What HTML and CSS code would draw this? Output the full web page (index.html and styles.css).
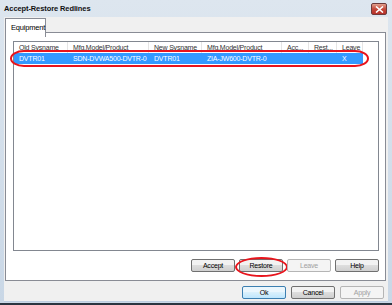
FILE: index.html
```html
<!DOCTYPE html>
<html lang="en">
<head>
    <meta charset="UTF-8">
    <title>Accept-Restore Redlines</title>
    <link rel="stylesheet" href="styles.css">
</head>
<body>
    <div class="window">
        <div class="titlebar">
            <span class="title">Accept-Restore Redlines</span>
            <span class="close">
                <svg width="9" height="7" viewBox="0 0 9 7"><path d="M1 0.5 L8 6.5 M8 0.5 L1 6.5" stroke="#fff" stroke-width="1.6"/></svg>
            </span>
        </div>
        <div class="client">
            <div class="tabs">
                <div class="tab active">Equipment</div>
            </div>
            <div class="panel">
                <div class="list">
                    <div class="row header">
                        <div class="cell c1">Old Sysname</div>
                        <div class="cell c2">Mfg.Model/Product</div>
                        <div class="cell c3">New Sysname</div>
                        <div class="cell c4">Mfg.Model/Product</div>
                        <div class="cell c5">Acc...</div>
                        <div class="cell c6">Rest...</div>
                        <div class="cell c7">Leave</div>
                        <div class="cell fill"></div>
                    </div>
                    <div class="row item selected">
                        <div class="cell c1">DVTR01</div>
                        <div class="cell c2">SDN-DVWA500-DVTR-0</div>
                        <div class="cell c3">DVTR01</div>
                        <div class="cell c4">ZIA-JW600-DVTR-0</div>
                        <div class="cell c5"></div>
                        <div class="cell c6"></div>
                        <div class="cell c7">X</div>
                        <span class="mark row-mark"></span>
                    </div>
                </div>
                <div class="actions">
                    <button class="btn">Accept</button>
                    <button class="btn marked">Restore<span class="mark btn-mark"></span></button>
                    <button class="btn" disabled>Leave</button>
                    <button class="btn">Help</button>
                </div>
            </div>
            <div class="footer">
                <button class="btn default">Ok</button>
                <button class="btn">Cancel</button>
                <button class="btn" disabled>Apply</button>
            </div>
        </div>
    </div>
</body>
</html>
```

FILE: styles.css
```css
body {
    margin: 0;
    font-family: "Liberation Sans", Arial, sans-serif;
    font-size: 7px;
    letter-spacing: -0.2px;
    color: #000;
}
.window {
    width: 392px;
    height: 305px;
    box-sizing: border-box;
    background: linear-gradient(#dde6ef, #c9d7e6);
    border-bottom: 2px solid #2a3440;
    display: flex;
    flex-direction: column;
}
.titlebar {
    height: 17px;
    display: flex;
    align-items: center;
    justify-content: space-between;
    padding: 0 5px 0 4px;
}
.title {
    font-weight: bold;
    color: #111;
    font-size: 7.5px;
    letter-spacing: -0.1px;
}
.close {
    width: 16px;
    height: 12px;
    margin-top: 1px;
    border: 1px solid #6d3a3a;
    border-radius: 2px;
    background: linear-gradient(#e2a18f, #c4493a 50%, #b7312a);
    display: flex;
    align-items: center;
    justify-content: center;
    box-sizing: border-box;
}
.client {
    flex: 1;
    margin: 0 4px 1px 4px;
    background: #f0f0f0;
    display: flex;
    flex-direction: column;
    border-bottom: 1px solid #bdcde0;
}
.tabs {
    display: flex;
    height: 14px;
    padding-left: 1px;
    margin-top: 1px;
}
.tab {
    background: #fff;
    border: 1px solid #898c95;
    border-bottom: none;
    padding: 4px 5px 0 5px;
    width: 29px;
    position: relative;
    z-index: 1;
    height: 14px;
    font-size: 7.5px;
}
.panel {
    background: #fff;
    border: 1px solid #898c95;
    margin: 0 2px 0 1px;
    padding: 8px 6px 8px 7px;
    height: 249px;
    box-sizing: border-box;
    display: flex;
    flex-direction: column;
}
.list {
    height: 210px;
    border: 1px solid #828790;
    position: relative;
    box-sizing: border-box;
}
.row {
    display: flex;
    height: 11px;
    align-items: center;
}
.header {
    height: 11px;
    color: #333;
}
.header .cell {
    border-right: 1px solid #e5e5e5;
    height: 11px;
    line-height: 12px;
}
.cell {
    box-sizing: border-box;
    padding-left: 5px;
    white-space: nowrap;
    overflow: hidden;
}
.c1 { width: 54px; }
.c2 { width: 81px; }
.c3 { width: 53px; }
.c4 { width: 80px; }
.c5 { width: 27px; }
.c6 { width: 28px; }
.c7 { width: 26px; }
.header .fill { flex: 1; border-right: none; }
.item {
    width: 349px;
    position: relative;
}
.selected {
    background: #3399ff;
    color: #fff;
}
.mark {
    position: absolute;
    border: 2px solid #e8141c;
    box-sizing: border-box;
}
.row-mark {
    left: -4px;
    top: -3px;
    width: 359px;
    height: 17px;
    border-radius: 14px / 8.5px;
}
.actions {
    margin-top: auto;
    display: flex;
    justify-content: flex-end;
    gap: 4px;
}
.btn {
    font-family: inherit;
    font-size: 7px;
    letter-spacing: -0.2px;
    width: 44px;
    height: 13px;
    padding: 0;
    border: 1px solid #707070;
    border-radius: 2px;
    background: linear-gradient(#f2f2f2 45%, #dddddd 50%, #cfcfcf);
    color: #000;
    position: relative;
}
.btn:disabled {
    border-color: #b5b5b5;
    background: #f4f4f4;
    color: #a0a0a0;
}
.btn.default {
    border-color: #3c7fb1;
    background: linear-gradient(#eaf6fd 45%, #d9f0fc 50%, #bee6fd);
}
.btn-mark {
    left: -5px;
    top: -3px;
    width: 53px;
    height: 20px;
    border-radius: 50%;
}
.footer {
    display: flex;
    justify-content: flex-end;
    gap: 5px;
    padding: 5px 4px 0 0;
}
```
